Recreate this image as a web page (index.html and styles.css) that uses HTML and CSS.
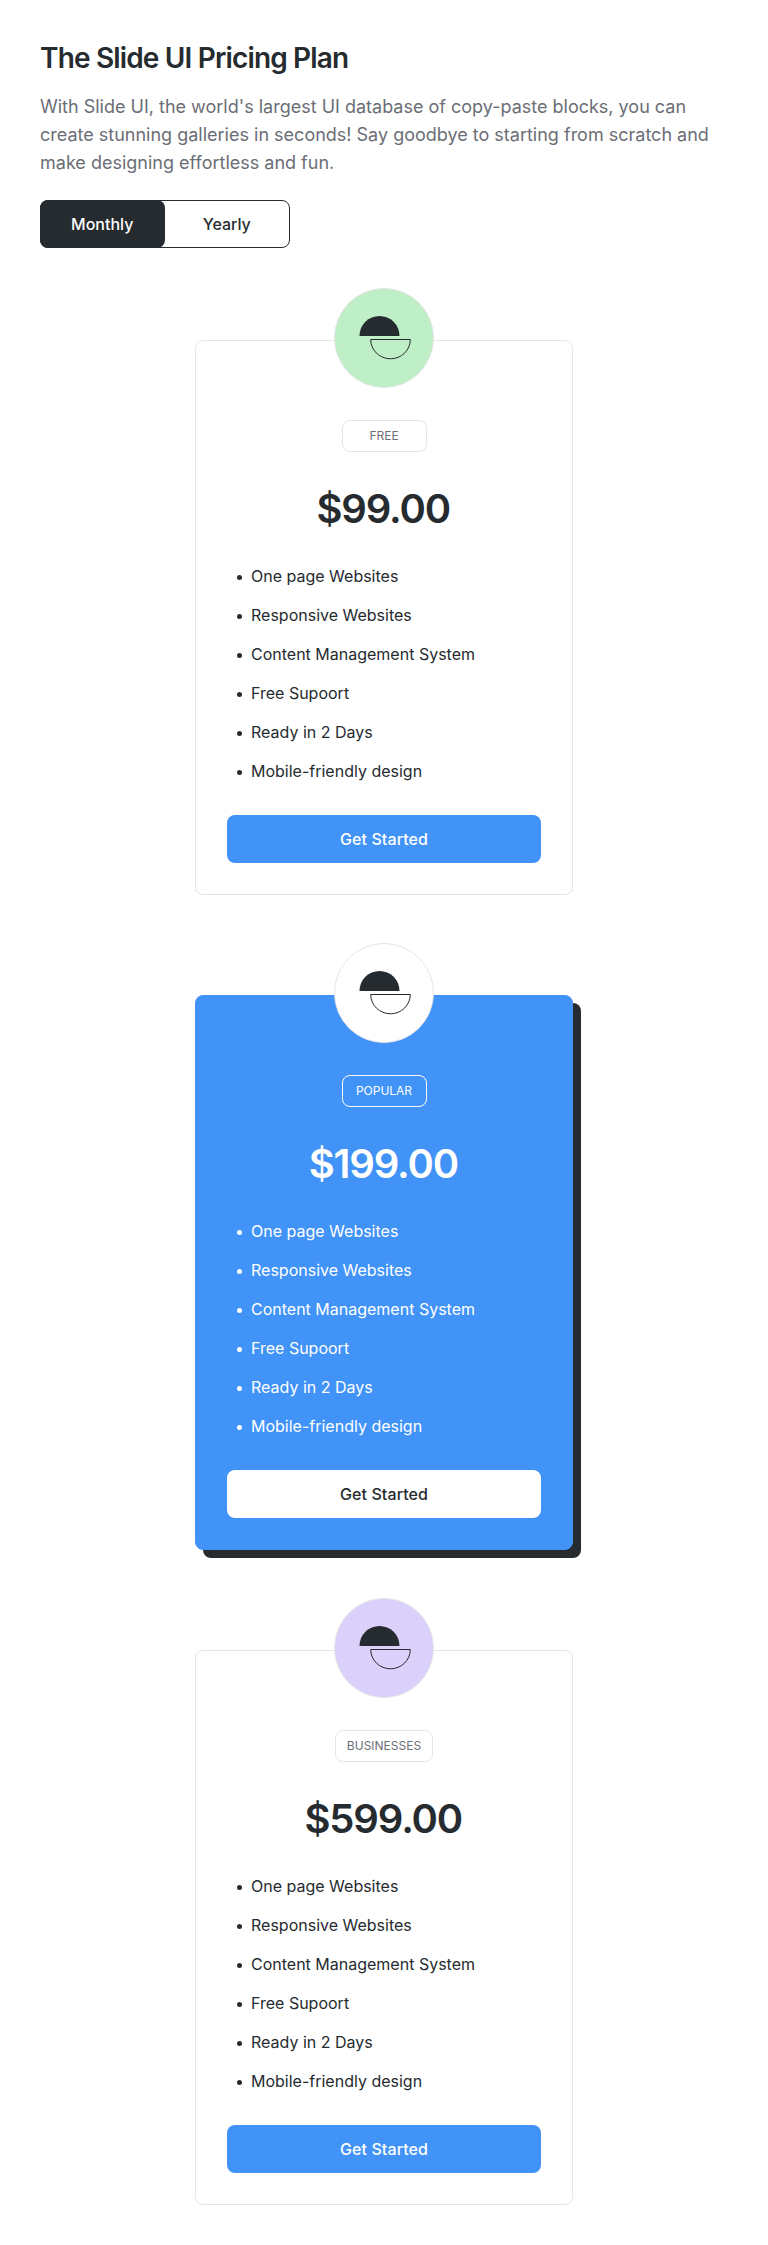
FILE: index.html
```html
<!DOCTYPE html>
<html lang="en">
<head>
<meta charset="utf-8">
<title>The Slide UI Pricing Plan</title>
<link rel="stylesheet" href="styles.css">
</head>
<body>
<main class="pricing">
  <header class="intro">
    <h1 class="title">The Slide UI Pricing Plan</h1>
    <p class="lead">With Slide UI, the world's largest UI database of copy-paste blocks, you can create stunning galleries in seconds! Say goodbye to starting from scratch and make designing effortless and fun.</p>
    <div class="toggle">
      <button class="toggle-option active" type="button">Monthly</button>
      <button class="toggle-option" type="button">Yearly</button>
    </div>
  </header>
  <section class="plans">
    <article class="card">
      <div class="avatar green">
        <svg viewBox="0 0 100 100"><path class="solid" d="M25.5 48a20 20 0 0 1 40 0z"/><path class="outline" d="M36.7 51.5h39.6a19.8 19.3 0 0 1-39.6 0z"/></svg>
      </div>
      <span class="badge">FREE</span>
      <p class="price">$99.00</p>
      <ul class="features">
        <li>One page Websites</li><li>Responsive Websites</li><li>Content Management System</li><li>Free Supoort</li><li>Ready in 2 Days</li><li>Mobile-friendly design</li>
      </ul>
      <button class="cta" type="button">Get Started</button>
    </article>
    <article class="card popular">
      <div class="avatar">
        <svg viewBox="0 0 100 100"><path class="solid" d="M25.5 48a20 20 0 0 1 40 0z"/><path class="outline" d="M36.7 51.5h39.6a19.8 19.3 0 0 1-39.6 0z"/></svg>
      </div>
      <span class="badge">POPULAR</span>
      <p class="price">$199.00</p>
      <ul class="features">
        <li>One page Websites</li><li>Responsive Websites</li><li>Content Management System</li><li>Free Supoort</li><li>Ready in 2 Days</li><li>Mobile-friendly design</li>
      </ul>
      <button class="cta" type="button">Get Started</button>
    </article>
    <article class="card">
      <div class="avatar purple">
        <svg viewBox="0 0 100 100"><path class="solid" d="M25.5 48a20 20 0 0 1 40 0z"/><path class="outline" d="M36.7 51.5h39.6a19.8 19.3 0 0 1-39.6 0z"/></svg>
      </div>
      <span class="badge">BUSINESSES</span>
      <p class="price">$599.00</p>
      <ul class="features">
        <li>One page Websites</li><li>Responsive Websites</li><li>Content Management System</li><li>Free Supoort</li><li>Ready in 2 Days</li><li>Mobile-friendly design</li>
      </ul>
      <button class="cta" type="button">Get Started</button>
    </article>
  </section>
</main>
</body>
</html>
```

FILE: styles.css
```css
* { box-sizing: border-box; margin: 0; padding: 0; }
body { background: #fff; color: #262b2f; font-family: Inter, "Liberation Sans", sans-serif; font-size: 16px; line-height: 24px; }
button { font: inherit; color: inherit; background: none; border: 0; }
.pricing { padding: 40px; }
.title { font-size: 28px; font-weight: 600; line-height: 36px; letter-spacing: -0.84px; }
.lead { margin-top: 17px; font-size: 18px; line-height: 28px; color: #6b6e76; }
.toggle { display: flex; width: 250px; height: 48px; margin-top: 23px; border: 1px solid #262b2f; border-radius: 8px; }
.toggle-option { flex: 1; font-weight: 500; }
.toggle-option.active { margin: -1px 0 -1px -1px; background: #262b2f; color: #fff; border-radius: 8px; }
.plans { display: flex; flex-direction: column; align-items: center; gap: 100px; margin-top: 92px; }
.card { display: flex; flex-direction: column; align-items: center; width: 378px; height: 555px; padding: 0 31px 31px; border: 1px solid #e4e5e7; border-radius: 8px; }
.avatar { flex: none; width: 100px; height: 100px; margin-top: -53px; border: 1px solid #e4e5e7; border-radius: 50%; background: #fff; }
.avatar svg { display: block; width: 100px; height: 100px; margin: -1px; }
.solid { fill: #262b2f; }
.outline { fill: none; stroke: #262b2f; stroke-width: 1; }
.green { background: #beefc6; }
.purple { background: #dbd1fb; }
.badge { min-width: 85px; height: 32px; margin-top: 32px; padding: 0 11px; border: 1px solid #e4e5e7; border-radius: 8px; font-size: 12px; line-height: 30px; text-align: center; color: #6b6e76; }
.price { margin-top: 33px; padding-right: 1.4px; font-size: 40px; font-weight: 600; line-height: 48px; letter-spacing: -1.15px; }
.features { display: flex; flex-direction: column; gap: 15px; align-self: stretch; margin-top: 31px; padding-left: 9.5px; list-style: none; }
.features li { display: flex; align-items: center; gap: 9.5px; }
.features li::before { content: ""; width: 5px; height: 5px; margin-top: 2px; border-radius: 50%; background: currentColor; }
.cta { flex: none; width: 314px; height: 48px; margin-top: auto; border-radius: 8px; background: #4193f7; color: #fff; font-weight: 500; letter-spacing: 0.1px; }
.popular { background: #4193f7; border-color: #4193f7; color: #fff; box-shadow: 8px 8px 0 #262b2f; }
.popular .badge { color: #fff; border-color: #fff; }
.popular .cta { background: #fff; color: #262b2f; }
```
